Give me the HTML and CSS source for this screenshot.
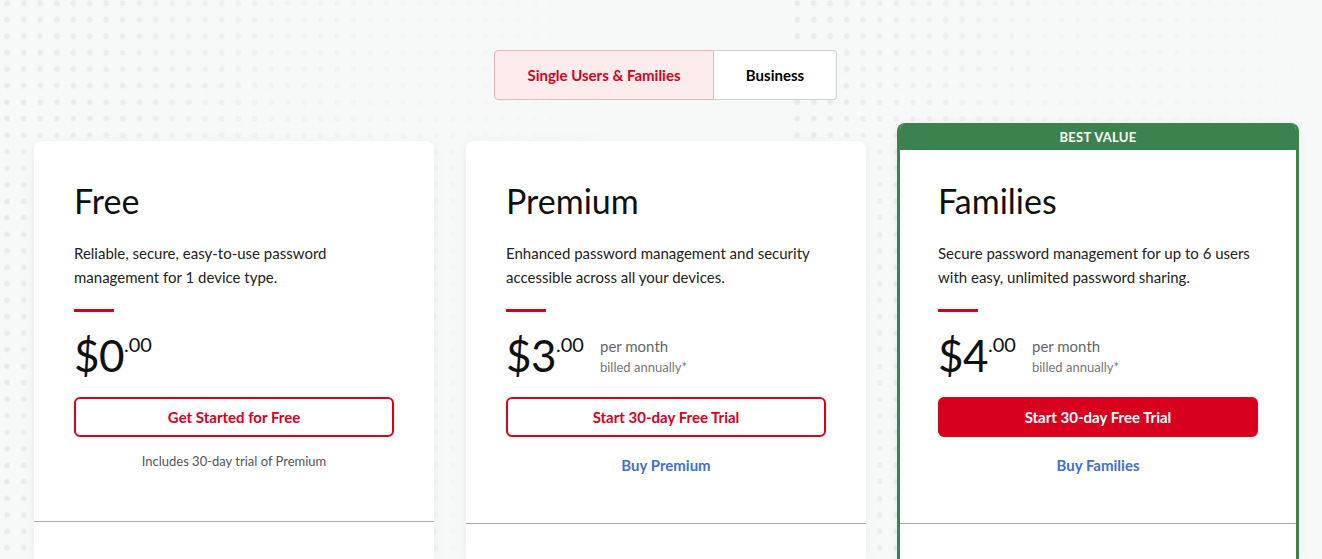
FILE: index.html
```html
<!DOCTYPE html>
<html lang="en">
<head>
    <meta charset="UTF-8">
    <meta name="viewport" content="width=device-width, initial-scale=1.0">
    <title>Plans and Pricing</title>
    <link rel="stylesheet" href="styles.css">
</head>
<body>

<div class="page">
    <div class="switcher">
        <a href="#" class="switch-btn active">Single Users &amp; Families</a>
        <a href="#" class="switch-btn">Business</a>
    </div>

    <div class="plans">
        <div class="plan">
            <div class="plan-top">
                <h2>Free</h2>
                <p class="desc">Reliable, secure, easy-to-use password management for 1 device type.</p>
                <div class="rule"></div>
                <div class="price">
                    <span class="amount">$0<sup>.00</sup></span>
                </div>
                <a href="#" class="btn btn-outline">Get Started for Free</a>
                <p class="note">Includes 30-day trial of Premium</p>
            </div>
            <div class="plan-bottom"></div>
        </div>

        <div class="plan">
            <div class="plan-top tall">
                <h2>Premium</h2>
                <p class="desc">Enhanced password management and security accessible across all your devices.</p>
                <div class="rule"></div>
                <div class="price">
                    <span class="amount">$3<sup>.00</sup></span>
                    <span class="period">per month<small>billed annually*</small></span>
                </div>
                <a href="#" class="btn btn-outline">Start 30-day Free Trial</a>
                <a href="#" class="buy">Buy Premium</a>
            </div>
            <div class="plan-bottom"></div>
        </div>

        <div class="plan featured">
            <div class="badge">BEST VALUE</div>
            <div class="plan-top">
                <h2>Families</h2>
                <p class="desc">Secure password management for up to 6 users with easy, unlimited password sharing.</p>
                <div class="rule"></div>
                <div class="price">
                    <span class="amount">$4<sup>.00</sup></span>
                    <span class="period">per month<small>billed annually*</small></span>
                </div>
                <a href="#" class="btn btn-solid">Start 30-day Free Trial</a>
                <a href="#" class="buy">Buy Families</a>
            </div>
            <div class="plan-bottom"></div>
        </div>
    </div>
</div>

</body>
</html>
```

FILE: styles.css
```css
* {
    margin: 0;
    padding: 0;
    box-sizing: border-box;
}

body {
    font-family: Lato, 'Noto Sans', sans-serif;
    background-color: #f7f8f8;
    color: #1a1a1a;
    position: relative;
    height: 559px;
    overflow: hidden;
}

/* faint dotted backdrop, strongest at the left and top right */
body::before,
body::after {
    content: "";
    position: absolute;
    top: 0;
    bottom: 0;
    z-index: -1;
    background-image: radial-gradient(circle, #e9eaea 2.6px, transparent 3.2px);
    background-size: 16.5px 16.5px;
    background-position: -1px -5px;
}

body::before {
    left: 0;
    width: 600px;
    -webkit-mask-image: linear-gradient(to right, #000 0%, rgba(0,0,0,0.35) 60%, transparent 100%);
    mask-image: linear-gradient(to right, #000 0%, rgba(0,0,0,0.35) 60%, transparent 100%);
}

body::after {
    left: 790px;
    right: 0;
    -webkit-mask-image: linear-gradient(to right, #000 0%, rgba(0,0,0,0.35) 50%, transparent 100%);
    mask-image: linear-gradient(to right, #000 0%, rgba(0,0,0,0.35) 50%, transparent 100%);
}

a {
    text-decoration: none;
}

.page {
    width: 1267px;
    margin-left: 32px;
    padding-top: 50px;
}

.switcher {
    display: flex;
    justify-content: center;
}

.switch-btn {
    height: 50px;
    display: flex;
    align-items: center;
    justify-content: center;
    font-size: 15px;
    font-weight: 700;
    color: #000;
    background: #fff;
    border: 1px solid #cfcfcf;
    width: 123px;
}

.switch-btn:first-child {
    border-radius: 4px 0 0 4px;
}

.switch-btn:last-child {
    border-radius: 0 4px 4px 0;
    border-left: none;
}

.switch-btn.active {
    width: 220px;
    color: #d7001f;
    background: #fcecec;
    border-color: #f0b4b8;
}

/* cards run on past the bottom of the view */
.plans {
    display: flex;
    gap: 32px;
    height: 418px;
    margin-top: 41px;
    margin-left: 2px;
}

.plan {
    width: 400px;
    display: flex;
    flex-direction: column;
    background: #fff;
    border-radius: 8px 8px 0 0;
    box-shadow: 0 2px 12px rgba(0, 0, 0, 0.05);
}

.plan-top {
    height: 381px;
    flex-shrink: 0;
    padding: 38px 40px 0;
    border-bottom: 1px solid #aaaaaa;
}

.plan-top.tall {
    height: 383px;
}

.plan-bottom {
    flex: 1;
}

.plan.featured {
    width: 402px;
    margin-left: -1px;
    margin-top: -18px;
    border: 3px solid #3b824e;
    border-top: none;
    border-bottom: none;
    overflow: hidden;
}

.featured .plan-top {
    height: 374px;
    padding: 29px 38px 0;
}

.badge {
    height: 27px;
    flex-shrink: 0;
    margin: 0 -3px;
    background: #3b824e;
    color: #fff;
    font-size: 13px;
    font-weight: 700;
    letter-spacing: 0.3px;
    display: flex;
    align-items: center;
    justify-content: center;
}

h2 {
    font-size: 34px;
    font-weight: 400;
    line-height: 44px;
    color: #111;
}

.desc {
    margin-top: 18px;
    font-size: 15px;
    line-height: 24px;
    color: #222;
}

.rule {
    width: 40px;
    height: 3px;
    margin-top: 20px;
    background: #d7001f;
}

.price {
    margin-top: 18px;
    display: flex;
    align-items: flex-start;
    height: 50px;
}

.amount {
    font-size: 44px;
    line-height: 50px;
    color: #111;
    letter-spacing: -0.5px;
}

.amount sup {
    font-size: 20px;
    vertical-align: top;
    line-height: 28px;
    letter-spacing: 0;
}

.period {
    margin-left: 16px;
    margin-top: 6px;
    font-size: 15px;
    line-height: 20px;
    color: #666;
    display: flex;
    flex-direction: column;
}

.period small {
    font-size: 13px;
    line-height: 22px;
    color: #777;
}

.btn {
    display: flex;
    align-items: center;
    justify-content: center;
    height: 40px;
    margin-top: 17px;
    border: 2px solid #d7001f;
    border-radius: 6px;
    font-size: 15px;
    font-weight: 700;
}

.btn-outline {
    color: #d7001f;
    background: #fff;
}

.btn-solid {
    color: #fff;
    background: #d7001f;
}

.note {
    margin-top: 14px;
    text-align: center;
    font-size: 13px;
    line-height: 20px;
    color: #555;
}

.buy {
    display: block;
    margin-top: 18px;
    text-align: center;
    font-size: 15px;
    line-height: 20px;
    font-weight: 700;
    color: #4170cf;
}
```
